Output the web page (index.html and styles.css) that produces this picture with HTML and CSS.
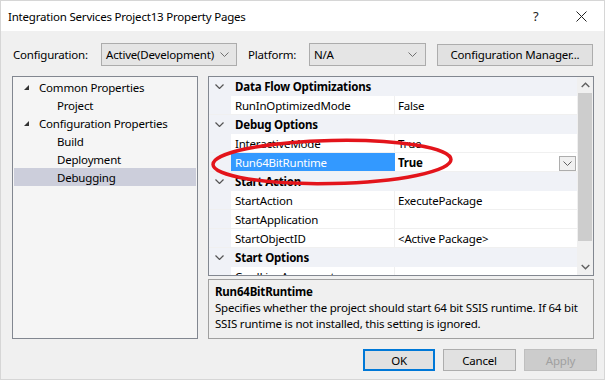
FILE: index.html
```html
<!DOCTYPE html>
<html lang="en">
<head>
  <meta charset="UTF-8" />
  <title>Integration Services Project13 Property Pages</title>
  <link rel="stylesheet" href="styles.css">
</head>
<body>
  <div class="window">
    <div class="titlebar">
      <span class="title">Integration Services Project13 Property Pages</span>
      <span class="tb-help">?</span>
      <span class="tb-close">
        <svg width="11" height="11" viewBox="0 0 11 11"><path d="M0.5 0.5 L10.5 10.5 M10.5 0.5 L0.5 10.5" stroke="#222" stroke-width="1" fill="none"/></svg>
      </span>
    </div>

    <div class="body">
      <div class="toolbar">
        <span class="lbl lbl-config">Configuration:</span>
        <div class="combo combo-config">
          <span>Active(Development)</span>
          <svg class="chev" width="9" height="5" viewBox="0 0 9 5"><polyline points="0.5,0.5 4.5,4.5 8.5,0.5" stroke="#707070" fill="none"/></svg>
        </div>
        <span class="lbl lbl-platform">Platform:</span>
        <div class="combo combo-platform">
          <span>N/A</span>
          <svg class="chev" width="9" height="5" viewBox="0 0 9 5"><polyline points="0.5,0.5 4.5,4.5 8.5,0.5" stroke="#707070" fill="none"/></svg>
        </div>
        <button class="btn btn-manager">Configuration Manager...</button>
      </div>

      <div class="main">
        <div class="tree">
          <div class="node parent"><svg class="tri" width="5" height="5" viewBox="0 0 5 5"><polygon points="5,0 5,5 0,5" fill="#333"/></svg>Common Properties</div>
          <div class="node child">Project</div>
          <div class="node parent"><svg class="tri" width="5" height="5" viewBox="0 0 5 5"><polygon points="5,0 5,5 0,5" fill="#333"/></svg>Configuration Properties</div>
          <div class="node child">Build</div>
          <div class="node child">Deployment</div>
          <div class="node child selected">Debugging</div>
        </div>

        <div class="right">
          <div class="grid">
            <div class="rows">
              <div class="row category">
                <div class="gutter"><svg width="9" height="5" viewBox="0 0 9 5"><polyline points="0.5,0.5 4.5,4.5 8.5,0.5" stroke="#555" stroke-width="1.2" fill="none"/></svg></div>
                <div class="cat-name">Data Flow Optimizations</div>
              </div>
              <div class="row">
                <div class="gutter"></div>
                <div class="name">RunInOptimizedMode</div>
                <div class="value">False</div>
              </div>
              <div class="row category">
                <div class="gutter"><svg width="9" height="5" viewBox="0 0 9 5"><polyline points="0.5,0.5 4.5,4.5 8.5,0.5" stroke="#555" stroke-width="1.2" fill="none"/></svg></div>
                <div class="cat-name">Debug Options</div>
              </div>
              <div class="row">
                <div class="gutter"></div>
                <div class="name">InteractiveMode</div>
                <div class="value">True</div>
              </div>
              <div class="row">
                <div class="gutter"></div>
                <div class="name selected">Run64BitRuntime</div>
                <div class="value bold">
                  <span>True</span>
                  <span class="drop"><svg width="9" height="5" viewBox="0 0 9 5"><polyline points="0.5,0.5 4.5,4.5 8.5,0.5" stroke="#606060" fill="none"/></svg></span>
                </div>
              </div>
              <div class="row category">
                <div class="gutter"><svg width="9" height="5" viewBox="0 0 9 5"><polyline points="0.5,0.5 4.5,4.5 8.5,0.5" stroke="#555" stroke-width="1.2" fill="none"/></svg></div>
                <div class="cat-name">Start Action</div>
              </div>
              <div class="row">
                <div class="gutter"></div>
                <div class="name">StartAction</div>
                <div class="value">ExecutePackage</div>
              </div>
              <div class="row">
                <div class="gutter"></div>
                <div class="name">StartApplication</div>
                <div class="value"></div>
              </div>
              <div class="row">
                <div class="gutter"></div>
                <div class="name">StartObjectID</div>
                <div class="value">&lt;Active Package&gt;</div>
              </div>
              <div class="row category">
                <div class="gutter"><svg width="9" height="5" viewBox="0 0 9 5"><polyline points="0.5,0.5 4.5,4.5 8.5,0.5" stroke="#555" stroke-width="1.2" fill="none"/></svg></div>
                <div class="cat-name">Start Options</div>
              </div>
              <div class="row">
                <div class="gutter"></div>
                <div class="name">CmdLineArguments</div>
                <div class="value"></div>
              </div>
            </div>
            <div class="scrollbar">
              <div class="arrow"><svg width="9" height="6" viewBox="0 0 9 6"><polyline points="0.7,5 4.5,1.2 8.3,5" stroke="#606060" stroke-width="1.4" fill="none"/></svg></div>
              <div class="thumb"></div>
              <div class="track"></div>
              <div class="arrow"><svg width="9" height="6" viewBox="0 0 9 6"><polyline points="0.7,1 4.5,4.8 8.3,1" stroke="#606060" stroke-width="1.4" fill="none"/></svg></div>
            </div>
          </div>

          <div class="desc">
            <div class="desc-title">Run64BitRuntime</div>
            <div class="desc-text">Specifies whether the project should start 64 bit SSIS runtime. If 64 bit<br>SSIS runtime is not installed, this setting is ignored.</div>
          </div>
        </div>
      </div>

      <div class="actions">
        <button class="btn btn-ok">OK</button>
        <button class="btn">Cancel</button>
        <button class="btn btn-disabled">Apply</button>
      </div>
    </div>

    <!-- red annotation round the selected property -->
    <svg class="mark" width="605" height="380" viewBox="0 0 605 380">
      <ellipse cx="332" cy="162" rx="119" ry="21.5" transform="rotate(-1.2 332 162)" fill="none" stroke="#e3141b" stroke-width="3.5"/>
    </svg>
  </div>
</body>
</html>
```

FILE: styles.css
```css
* {
  box-sizing: border-box;
}

body {
  margin: 0;
  font-family: "Noto Sans", "Open Sans", sans-serif;
  font-size: 11.5px;
  letter-spacing: -0.2px;
  color: #000;
}

.window {
  position: relative;
  width: 605px;
  height: 380px;
  border: 1px solid #d6d6d6;
  background: #f0f0f0;
  overflow: hidden;
}

.titlebar {
  display: flex;
  align-items: center;
  height: 30px;
  padding-left: 7px;
  background: #fff;
}

.title {
  flex: 1;
}

.tb-help {
  width: 14px;
  margin-right: 29px;
  font-size: 13px;
  color: #222;
}

.tb-close {
  display: flex;
  margin-right: 17px;
}

.body {
  padding: 0 10px 0 11px;
}

.toolbar {
  display: flex;
  align-items: center;
  height: 23px;
  margin-top: 12px;
}

.lbl-config {
  width: 89px;
  padding-left: 1px;
}

.lbl-platform {
  width: 72px;
  padding-left: 11px;
}

.combo {
  display: flex;
  align-items: center;
  justify-content: space-between;
  height: 23px;
  padding: 0 7px 0 4px;
  background: #e5e5e5;
  border: 1px solid #acacac;
}

.combo-config {
  width: 136px;
}

.combo-platform {
  width: 117px;
  padding-right: 8px;
}

.btn {
  height: 22px;
  font-family: inherit;
  font-size: 11.5px;
  letter-spacing: -0.2px;
  color: #000;
  background: #e1e1e1;
  border: 1px solid #adadad;
  padding: 0;
}

.btn-manager {
  width: 156px;
  height: 22px;
  margin-left: 11px;
}

.main {
  display: flex;
  gap: 10px;
  height: 263px;
  margin-top: 10px;
}

.tree {
  width: 186px;
  padding: 1px 1px 0 1px;
  background: #f5f5f5;
  border: 1px solid #828790;
}

.node {
  display: flex;
  align-items: center;
  height: 18px;
  padding-top: 1px;
}

.node.parent {
  padding-left: 10px;
}

.node.parent .tri {
  margin-right: 10px;
}

.node.child {
  padding-left: 43px;
}

.node.selected {
  background: #cccedb;
}

.right {
  display: flex;
  flex-direction: column;
  width: 386px;
  gap: 3px;
}

.grid {
  display: flex;
  height: 200px;
  border: 1px solid #828790;
  background: #fff;
}

.rows {
  flex: 1;
  overflow: hidden;
}

.row {
  display: flex;
  height: 19px;
  border-bottom: 1px solid #f0f0f0;
}

.gutter {
  display: flex;
  align-items: center;
  width: 22px;
  padding-left: 6px;
  background: #f0f2f7;
}

.row.category {
  background: #f0f2f7;
  border-bottom-color: #f0f2f7;
}

.cat-name {
  padding: 1px 0 0 4px;
  line-height: 17px;
  font-weight: bold;
}

.name {
  width: 164px;
  padding: 1px 0 0 4px;
  line-height: 17px;
  border-right: 1px solid #f0f0f0;
  white-space: nowrap;
}

.name.selected {
  background: #3399ff;
  color: #fff;
  border-right-color: #3399ff;
}

.value {
  display: flex;
  justify-content: space-between;
  align-items: flex-end;
  flex: 1;
  padding: 1px 1px 0 3px;
  line-height: 17px;
  white-space: nowrap;
}

.value.bold {
  font-weight: bold;
}

.drop {
  display: flex;
  align-items: center;
  justify-content: center;
  width: 17px;
  height: 15px;
  background: #f0f0f0;
  border: 1px solid #adadad;
}

.scrollbar {
  display: flex;
  flex-direction: column;
  width: 16px;
  background: #f0f0f0;
}

.arrow {
  display: flex;
  align-items: center;
  justify-content: center;
  height: 16px;
}

.thumb {
  height: 148px;
  margin: 0 1px;
  background: #cdcdcd;
}

.track {
  flex: 1;
}

.desc {
  height: 60px;
  padding: 4px 5px 0 6px;
  border: 1px solid #a0a0a0;
  line-height: 16px;
}

.desc-title {
  font-weight: bold;
}

.desc-text {
  white-space: nowrap;
}

.actions {
  display: flex;
  justify-content: flex-end;
  gap: 8px;
  margin-top: 10px;
  margin-right: -3px;
}

.actions .btn {
  width: 73px;
}

.actions .btn-ok {
  width: 72px;
  border: 2px solid #0078d7;
}

.btn-disabled {
  background: #cccccc;
  border-color: #bfbfbf;
  color: #a0a0a0;
}

.mark {
  position: absolute;
  top: -1px;
  left: -1px;
  pointer-events: none;
}
```
